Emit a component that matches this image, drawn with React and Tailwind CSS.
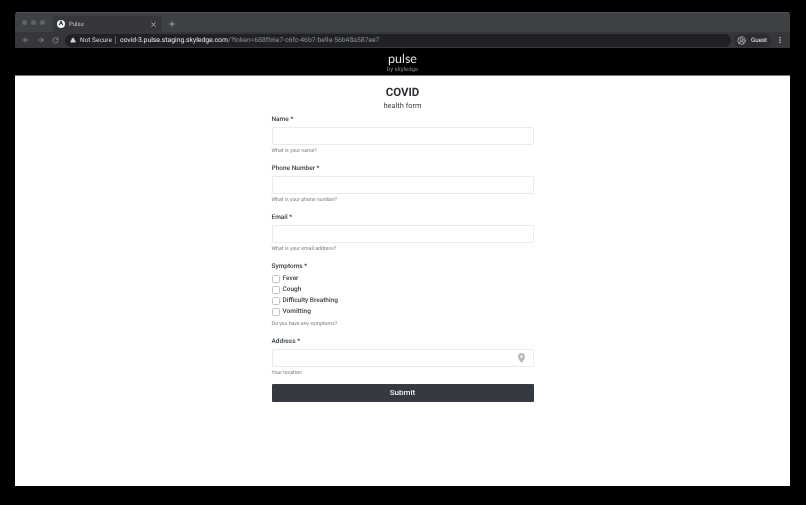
import { ArrowLeft, ArrowRight, RotateCw, X, Plus, TriangleAlert, EllipsisVertical, CircleUserRound } from "lucide-react";

function Field({ label, hint, icon }) {
  return (
    <div className="mb-[5px]">
      <div className="h-[12px] text-[6.5px] leading-[12px] font-medium text-[#3a4046]">{label} *</div>
      <div className="mt-[2px] h-[18px] flex items-center justify-end pr-[8px] border border-[#ebebeb] rounded-[1px] bg-white">
        {icon}
      </div>
      <div className="h-[12px] text-[5.2px] leading-[12px] text-[#777c80]">{hint}</div>
    </div>
  );
}

export default function App() {
  const symptoms = ["Fever", "Cough", "Difficulty Breathing", "Vomitting"];

  return (
    <div className="w-[806px] h-[505px] bg-black pt-[12px] pl-[15px] pr-[16px] pb-[19px] overflow-hidden font-['Roboto',sans-serif] antialiased [text-rendering:geometricPrecision] blur-[0.35px]">
      <div className="h-full flex flex-col rounded-t-[3px] overflow-hidden">
        {/* browser tabs */}
        <div className="h-[20px] shrink-0 bg-[#3f4245] flex items-end border-t border-[#505357]">
          <div className="flex gap-[4px] ml-[7px] mb-[7px]">
            <span className="w-[5px] h-[5px] rounded-full bg-[#5f6368]"></span>
            <span className="w-[5px] h-[5px] rounded-full bg-[#5f6368]"></span>
            <span className="w-[5px] h-[5px] rounded-full bg-[#5f6368]"></span>
          </div>
          <div className="ml-[8px] w-[109px] h-[16px] bg-[#35373a] rounded-t-[4px] flex items-center pl-[4px] pr-[5px]">
            <span className="w-[8px] h-[8px] rounded-full bg-[#f1f1f1] text-[6px] leading-[8px] font-bold text-black text-center">A</span>
            <span className="ml-[4px] flex-1 text-[6px] text-[#c4c7c9]">Pulse</span>
            <X size={7} strokeWidth={2.5} className="text-[#d5d7d9]" />
          </div>
          <Plus size={8} strokeWidth={2} className="ml-[6px] mb-[4px] text-[#c4c7c9]" />
        </div>

        {/* address bar */}
        <div className="h-[16px] shrink-0 bg-[#35373a] flex items-center">
          <ArrowLeft size={8} strokeWidth={2} className="ml-[7px] text-[#a0a3a6]" />
          <ArrowRight size={8} strokeWidth={2} className="ml-[7px] text-[#a0a3a6]" />
          <RotateCw size={7} strokeWidth={2} className="ml-[7px] text-[#a0a3a6]" />
          <div className="ml-[6px] w-[666px] h-[13px] rounded-full bg-[#202124] flex items-center pl-[5px]">
            <TriangleAlert size={6} fill="#d5d7d9" strokeWidth={1.5} className="text-[#d5d7d9]" />
            <span className="ml-[4px] mt-[1px] text-[6.5px] text-[#d5d7d9]">Not Secure</span>
            <span className="ml-[3px] w-px h-[8px] bg-[#5f6368]"></span>
            <span className="ml-[4px] text-[6.8px] text-[#e8eaed] whitespace-nowrap">
              covid-3.pulse.staging.skyledge.com<span className="text-[#8e9194]">/?token=688fb6e7-c6fc-46b7-be9e-56b48a587ee7</span>
            </span>
          </div>
          <div className="ml-[3px] w-[37px] h-[13px] rounded-full bg-[#2c2d30] flex items-center pl-[3px]">
            <CircleUserRound size={9} strokeWidth={2} className="text-[#c4c7c9]" />
            <span className="ml-[5px] mt-[1px] text-[6.2px] text-[#e8eaed]">Guest</span>
          </div>
          <EllipsisVertical size={8} strokeWidth={2.5} className="ml-[5px] text-[#c4c7c9]" />
        </div>

        {/* site header */}
        <div className="h-[28px] shrink-0 bg-black flex flex-col items-center justify-center border-b border-[#777]">
          <div className="mt-[1px] text-[12.5px] leading-[14px] text-[#e4e4e4] font-['Lato',sans-serif]">pulse</div>
          <div className="text-[6px] leading-[7px] text-[#8a8a8a]">by skyledge</div>
        </div>

        {/* form */}
        <div className="flex-1 bg-white flex flex-col items-center pt-[9px]">
          <div className="text-[11.5px] leading-[14px] font-bold text-[#2b2f33]">COVID</div>
          <div className="mt-[1px] text-[7.4px] leading-[12px] text-[#3c4145]">health form</div>

          <div className="w-[262px] mt-[1px]">
            <Field label="Name" hint="What is your name?" />
            <Field label="Phone Number" hint="What is your phone number?" />
            <Field label="Email" hint="What is your email address?" />

            <div className="h-[12px] text-[6.5px] leading-[12px] font-medium text-[#3a4046]">Symptoms *</div>
            <div className="mt-[1px] flex flex-col">
              {symptoms.map((s) => (
                <div key={s} className="h-[11px] flex items-center">
                  <span className="w-[8px] h-[8px] mt-[1px] rounded-[1.5px] border border-[#c4c4c4] bg-white"></span>
                  <span className="ml-[3px] text-[6.5px] font-medium text-[#3a4046]">{s}</span>
                </div>
              ))}
            </div>
            <div className="mt-[1px] h-[13px] text-[5.2px] leading-[13px] text-[#777c80]">Do you have any symptoms?</div>

            <div className="mt-[4px]">
              <Field
                label="Address"
                hint="Your location"
                icon={
                  <svg width="7" height="10" viewBox="0 0 14 20">
                    <path fillRule="evenodd" fill="#b8b8b8" d="M7 0C3.1 0 0 3.1 0 7c0 5 7 13 7 13s7-8 7-13c0-3.9-3.1-7-7-7zm0 9.5A2.5 2.5 0 1 1 7 4.5a2.5 2.5 0 0 1 0 5z" />
                  </svg>
                }
              />
            </div>

            <button className="block w-full h-[18px] mt-[3px] rounded-[1px] bg-[#343a40] text-[8px] font-medium text-[#f2f2f2]">Submit</button>
          </div>
        </div>
      </div>
    </div>
  );
}
